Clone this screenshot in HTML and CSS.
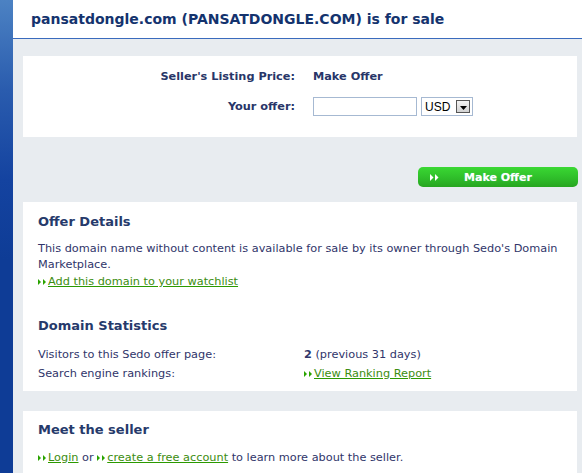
FILE: index.html
```html
<!DOCTYPE html>
<html>
<head>
<meta charset="utf-8">
<link rel="stylesheet" href="styles.css">
</head>
<body>
<div class="page">
  <div class="sidebar"></div>
  <div class="main">
    <div class="header">
      <h1 class="title">pansatdongle.com (PANSATDONGLE.COM) is for sale</h1>
    </div>
    <div class="content">
      <div class="panel form-panel">
        <div class="form-grid">
          <div class="label">Seller's Listing Price:</div>
          <div class="value">Make Offer</div>
          <div class="label">Your offer:</div>
          <div class="controls">
            <div class="text-input"></div>
            <div class="fake-select">
              <span class="sel-text">USD</span>
              <span class="sel-btn"><svg width="7" height="4" viewBox="0 0 7 4"><polygon points="0,0 7,0 3.5,4" fill="#000"/></svg></span>
            </div>
          </div>
        </div>
      </div>
      <div class="actions">
        <div class="btn-make">
          <svg class="btn-arrows" width="9" height="7" viewBox="0 0 9 7"><polygon points="0,0 3.5,3.5 0,7" fill="#fff"/><polygon points="5,0 8.5,3.5 5,7" fill="#fff"/></svg>
          <span class="btn-text">Make Offer</span>
        </div>
      </div>
      <div class="panel details">
        <h2 class="heading">Offer Details</h2>
        <p class="para">This domain name without content is available for sale by its owner through Sedo's Domain Marketplace.</p>
        <div class="link-line"><svg class="arr" width="9" height="6" viewBox="0 0 9 6"><polygon points="0,0 3,3 0,6" fill="#2aa300"/><polygon points="5,0 8,3 5,6" fill="#2aa300"/></svg><a class="link" href="#">Add this domain to your watchlist</a></div>
        <h2 class="heading stats-heading">Domain Statistics</h2>
        <div class="stats">
          <div class="stat-label">Visitors to this Sedo offer page:</div>
          <div class="stat-value"><b>2</b> (previous 31 days)</div>
          <div class="stat-label">Search engine rankings:</div>
          <div class="stat-value"><svg class="arr" width="9" height="6" viewBox="0 0 9 6"><polygon points="0,0 3,3 0,6" fill="#2aa300"/><polygon points="5,0 8,3 5,6" fill="#2aa300"/></svg><a class="link" href="#">View Ranking Report</a></div>
        </div>
      </div>
      <div class="panel seller">
        <h2 class="heading">Meet the seller</h2>
        <div class="seller-line"><svg class="arr" width="9" height="6" viewBox="0 0 9 6"><polygon points="0,0 3,3 0,6" fill="#2aa300"/><polygon points="5,0 8,3 5,6" fill="#2aa300"/></svg><a class="link" href="#">Login</a> or <svg class="arr" width="9" height="6" viewBox="0 0 9 6"><polygon points="0,0 3,3 0,6" fill="#2aa300"/><polygon points="5,0 8,3 5,6" fill="#2aa300"/></svg><a class="link" href="#">create a free account</a> to learn more about the seller.</div>
      </div>
    </div>
  </div>
</div>
</body>
</html>
```

FILE: styles.css
```css
html, body {
  margin: 0;
  padding: 0;
  background: #e8ecf0;
  font-family: "DejaVu Sans", Verdana, sans-serif;
  font-size: 11.3px;
  color: #30356a;
}
.page {
  display: flex;
  min-height: 473px;
}
.sidebar {
  width: 13px;
  flex: none;
  background: linear-gradient(180deg, #4c82c3 0px, #2a5cae 90px, #1443a0 180px, #0e3c96 260px, #0e3c96 100%);
}
.main {
  flex: 1;
  background: #e8ecf0;
}
.header {
  background: #fff;
  height: 38px;
  border-bottom: 1px solid #3a6bbd;
  display: flex;
  align-items: center;
  padding-left: 18px;
}
.title {
  margin: 0;
  font-size: 14px;
  font-weight: bold;
  color: #14336e;
  line-height: 20px;
}
.content {
  padding: 17px 5px 0 10px;
}
.panel {
  background: #fff;
}
.form-panel {
  height: 81px;
  box-sizing: border-box;
  padding-top: 11px;
}
.form-grid {
  display: grid;
  grid-template-columns: 272px auto;
  column-gap: 18px;
  grid-auto-rows: 19px;
  row-gap: 11px;
  align-items: center;
  font-weight: bold;
  color: #283668;
}
.label {
  text-align: right;
}
.controls {
  display: flex;
  gap: 4px;
  align-items: center;
}
.text-input {
  width: 102px;
  height: 17px;
  border: 1px solid #a6b9d2;
  background: #fff;
}
.fake-select {
  height: 17px;
  border: 1px solid #a6b9d2;
  background: #fff;
  display: flex;
  align-items: center;
  justify-content: space-between;
  padding: 0 2px 0 3px;
  width: 45px;
}
.sel-text {
  font-family: "Liberation Sans", Arial, sans-serif;
  font-weight: normal;
  font-size: 12px;
  color: #000;
}
.sel-btn {
  width: 14px;
  height: 13px;
  box-sizing: border-box;
  border: 1px solid #555;
  background: linear-gradient(#f4f4f4, #d2d2d2);
  display: flex;
  align-items: center;
  justify-content: center;
  padding-top: 2px;
}
.actions {
  display: flex;
  justify-content: flex-end;
  padding: 30px 0 15px;
  margin-right: -1px;
}
.btn-make {
  width: 160px;
  height: 20px;
  border-radius: 5px;
  background: linear-gradient(#3ad833, #2fbe2a 55%, #27a520);
  display: grid;
  grid-template-columns: 1fr auto 1fr;
  align-items: center;
  color: #fff;
  font-weight: bold;
  font-size: 11px;
}
.btn-arrows {
  margin-left: 12px;
}
.btn-text {
  grid-column: 2;
  text-shadow: 0 0 1px #6fd7a0;
}
.details {
  padding: 10px 15px 8px;
}
.heading {
  margin: 0;
  font-size: 13px;
  font-weight: bold;
  line-height: 20px;
  color: #263a6b;
}
.para {
  margin: 9px 0 0;
  line-height: 16px;
}
.link-line {
  line-height: 18px;
}
.arr {
  margin-right: 1px;
  vertical-align: 0px;
}
.link {
  color: #3c8d0f;
  text-decoration: underline;
  text-decoration-color: #2b9a00;
}
.stats-heading {
  margin-top: 25px;
}
.stats {
  display: grid;
  grid-template-columns: 266px auto;
  grid-auto-rows: 19px;
  align-items: center;
  margin-top: 9px;
}
.seller {
  margin-top: 20px;
  padding: 9px 15px 20px;
}
.seller-line {
  margin-top: 10px;
  line-height: 16px;
}
```
